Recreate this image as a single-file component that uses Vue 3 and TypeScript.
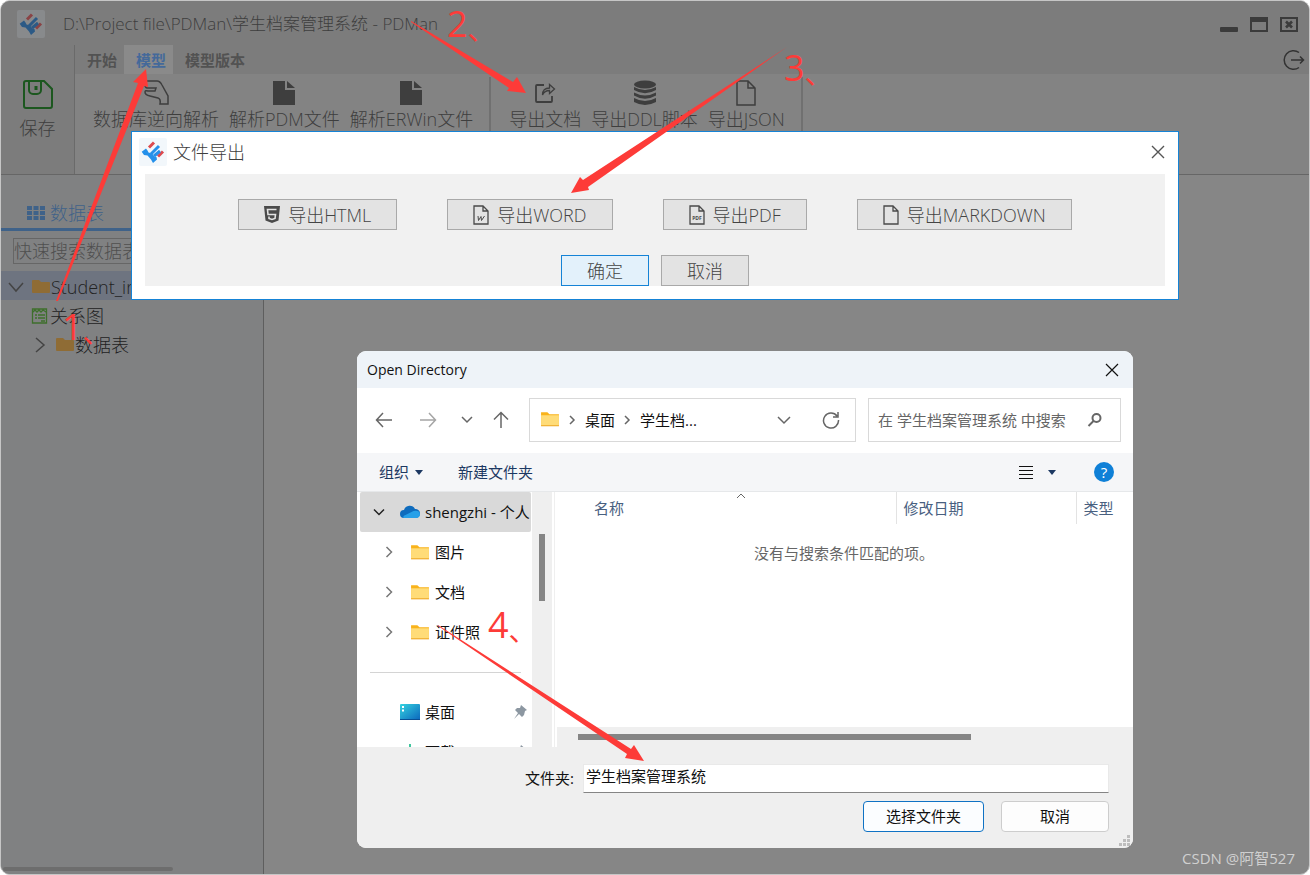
<script setup lang="ts">
import { ref } from 'vue'

interface RibbonItem {
  label: string
  icon: 'reverse' | 'file' | 'share' | 'database' | 'blank'
}

interface ExportOption {
  label: string
  icon: 'html' | 'word' | 'pdf' | 'blank'
}

interface Arrow {
  points: string
  step: number
  x: number
  y: number
}

const tabs: string[] = ['开始', '模型', '模型版本']
const activeTab = ref<string>('模型')

const ribbonGroups: RibbonItem[][] = [
  [
    { label: '数据库逆向解析', icon: 'reverse' },
    { label: '解析PDM文件', icon: 'file' },
    { label: '解析ERWin文件', icon: 'file' },
  ],
  [
    { label: '导出文档', icon: 'share' },
    { label: '导出DDL脚本', icon: 'database' },
    { label: '导出JSON', icon: 'blank' },
  ],
]

const exportOptions: ExportOption[] = [
  { label: '导出HTML', icon: 'html' },
  { label: '导出WORD', icon: 'word' },
  { label: '导出PDF', icon: 'pdf' },
  { label: '导出MARKDOWN', icon: 'blank' },
]

const folders: string[] = ['图片', '文档', '证件照']
const search = ref<string>('')
const fileSearch = ref<string>('')
const folderName = ref<string>('学生档案管理系统')

const arrows: Arrow[] = [
  { points: '56,301 138,83 133,82 146,69 148,87 144,86 58,301', step: 1, x: 62, y: 340 },
  { points: '411,21 513,82 517,77 526,93 507,91 509,88 411,22', step: 2, x: 447, y: 37 },
  { points: '787,47 583,180 580,177 571,193 589,190 588,187', step: 3, x: 784, y: 81 },
  { points: '438,625 631,749 634,745 644,761 625,758 627,754 438,626', step: 4, x: 488, y: 638 },
]
</script>

<template>
  <div class="screen">
    <div class="window">
      <header class="titlebar">
        <svg class="logo dim" viewBox="0 0 28 28" aria-hidden="true">
          <rect class="tile" width="28" height="28" rx="2" />
          <path class="red" d="M10 9.500l5-5M19 18.500l5-5" />
          <path class="blue-line" d="M20 8l-8 8M15 18l6-5" />
          <path class="blue" d="M2.700 13.700L7 10.500l1.500 2 1 2 3.500 1 2.500 3 2 .5.5 2.500-4 3.500-2-3.500-3.500-4-3.500-.5z" />
        </svg>
        <h1>D:\Project file\PDMan\学生档案管理系统 - PDMan</h1>
        <div class="window-buttons">
          <button type="button" aria-label="最小化">
            <svg viewBox="0 0 18 18"><rect y="12" width="18" height="5" rx="1" fill="#3b3b3b" /></svg>
          </button>
          <button type="button" aria-label="最大化">
            <svg viewBox="0 0 18 18"><path d="M1 3h16v13H1z" fill="none" stroke="#3b3b3b" stroke-width="2" /><path d="M0 2h18v5H0z" fill="#3b3b3b" /></svg>
          </button>
          <button type="button" aria-label="关闭">
            <svg viewBox="0 0 18 18"><path d="M1 3h16v13H1z" fill="none" stroke="#3b3b3b" stroke-width="2" /><path d="M6 6.500l6 6M12 6.500l-6 6" stroke="#3b3b3b" stroke-width="2.600" /></svg>
          </button>
        </div>
      </header>

      <div class="ribbon">
        <button type="button" class="save">
          <svg viewBox="0 0 30 30" fill="none" stroke="#1c571f" stroke-width="2">
            <path d="M3 1h18l8 8v17a2 2 0 0 1-2 2H3a2 2 0 0 1-2-2V3a2 2 0 0 1 2-2z" />
            <path d="M6 2v8a4 4 0 0 0 4 4h4a4 4 0 0 0 4-4V2" />
            <path d="M13 6v4" stroke-width="3" />
          </svg>
          <span>保存</span>
        </button>
        <div class="ribbon-main">
          <div class="tabs">
            <button
              v-for="tab in tabs"
              :key="tab"
              type="button"
              :class="['tab', { active: tab === activeTab }]"
              @click="activeTab = tab"
            >{{ tab }}</button>
            <button type="button" class="logout" aria-label="退出">
              <svg viewBox="0 0 22 22" fill="none" stroke="#333" stroke-width="1.500">
                <path d="M16 3.500A9.300 9.300 0 1 0 16 18.500M8 11h12M17 7.500l3.500 3.500-3.500 3.500" />
              </svg>
            </button>
          </div>
          <div class="tools">
            <div v-for="(group, g) in ribbonGroups" :key="g" class="tool-group">
              <button v-for="item in group" :key="item.label" type="button" class="tool">
                <svg viewBox="0 0 26 26" fill="none" stroke="#3e3e3e" stroke-width="1.500">
                  <path v-if="item.icon === 'reverse'" d="M2 1h12q3 0 5 4l6 11v8h-8q1-5-2-6l-8-2q-5-1-5-4 0-2 3-1h7l1-3H4Q1 7 2 1z" />
                  <g v-else-if="item.icon === 'file'" fill="#3e3e3e" stroke="none">
                    <path d="M2 1h12v9h10v15H2z" /><path d="M16 1l8 7h-8z" />
                  </g>
                  <g v-else-if="item.icon === 'share'">
                    <path d="M12 5H5a1 1 0 0 0-1 1v15a1 1 0 0 0 1 1h14a1 1 0 0 0 1-1v-5" stroke-width="1.800" />
                    <path d="M10.500 15q0-7 7-7V4.500L22.500 9l-5 4.500V10.500q-5 0-7 4.500z" stroke-width="1.300" />
                  </g>
                  <g v-else-if="item.icon === 'database'" fill="#3e3e3e" stroke="none">
                    <ellipse cx="13" cy="4.500" rx="11" ry="4" />
                    <path d="M2 7q11 6 22 0v3q-11 6.500-22 0zM2 12.500q11 6 22 0v3q-11 6.500-22 0zM2 18q11 6 22 0v4q-11 6-22 0z" />
                  </g>
                  <path v-else d="M4 1h11l7 7v17H4zM15 1v7h7" />
                </svg>
                <span>{{ item.label }}</span>
              </button>
            </div>
          </div>
        </div>
      </div>

      <div class="body">
        <aside class="sidebar">
          <div class="side-tab">
            <svg viewBox="0 0 18 14" fill="#3f6289">
              <path d="M0 0h5v4H0zM6.500 0h5v4h-5zM13 0h5v4h-5zM0 5h5v4H0zM6.500 5h5v4h-5zM13 5h5v4h-5zM0 10h5v4H0zM6.500 10h5v4h-5zM13 10h5v4h-5z" />
            </svg>
            <span>数据表</span>
          </div>
          <input v-model="search" class="side-search" type="text" placeholder="快速搜索数据表" aria-label="快速搜索数据表" />
          <ul class="tree">
            <li class="node selected">
              <svg class="caret" viewBox="0 0 16 16"><path d="M1 4l7 8 7-8" /></svg>
              <svg class="folder" viewBox="0 0 18 16"><path d="M1 1h6l2 2h8q1 0 1 1v9q0 1-1 1H1q-1 0-1-1V2q0-1 1-1z" /></svg>
              <span>Student_info</span>
            </li>
            <li class="node diagram">
              <svg class="folder" viewBox="0 0 18 16">
                <path class="green" d="M1.500 1h14v14h-14zM2 4l2-2 2 2 2-2 2 2 2-2 3 2M4 7h2M7 7h7M4 10h2M7 10h7M10 13h4" />
              </svg>
              <span>关系图</span>
            </li>
            <li class="node child">
              <svg class="caret" viewBox="0 0 16 16"><path d="M4 1l8 7-8 7" /></svg>
              <svg class="folder" viewBox="0 0 18 16"><path d="M1 1h6l2 2h8q1 0 1 1v9q0 1-1 1H1q-1 0-1-1V2q0-1 1-1z" /></svg>
              <span>数据表</span>
            </li>
          </ul>
          <div class="side-scroll"></div>
        </aside>
        <main class="canvas"></main>
      </div>
    </div>

    <section class="export" role="dialog" aria-label="文件导出">
      <header>
        <svg class="logo" viewBox="0 0 28 28" aria-hidden="true">
          <rect class="tile" width="28" height="28" rx="2" />
          <path class="red" d="M10 9.500l5-5M19 18.500l5-5" />
          <path class="blue-line" d="M20 8l-8 8M15 18l6-5" />
          <path class="blue" d="M2.700 13.700L7 10.500l1.500 2 1 2 3.500 1 2.500 3 2 .5.5 2.500-4 3.500-2-3.500-3.500-4-3.500-.5z" />
        </svg>
        <h2>文件导出</h2>
        <button type="button" class="close" aria-label="关闭">
          <svg viewBox="0 0 14 14"><path d="M1 1l12 12M13 1L1 13" stroke="#555" stroke-width="1.400" /></svg>
        </button>
      </header>
      <div class="export-body">
        <div class="options">
          <button v-for="option in exportOptions" :key="option.label" type="button" class="flat">
            <svg viewBox="0 0 16 20" fill="none" stroke="#4a4a4a" stroke-width="1.300">
              <g v-if="option.icon === 'html'" stroke="none">
                <path d="M0 1h16l-1.500 14.500L8 18l-6.500-2.500z" fill="#4a4a4a" />
                <path d="M12.500 4.500h-9l.5 5h7.500l-.5 4L8 14.500 5 13.500v-2" stroke="#e3e3e3" stroke-width="1.600" />
              </g>
              <g v-else>
                <path d="M1 1h9l5 5v13H1zM10 1v5h5" />
                <path v-if="option.icon === 'word'" d="M5 11l.5 4.500L8 11.500l.5 4L11.500 11" stroke-width="1" />
              </g>
              <text v-if="option.icon === 'pdf'" x="8" y="15" class="pdf">PDF</text>
            </svg>
            <span>{{ option.label }}</span>
          </button>
        </div>
        <div class="confirm">
          <button type="button" class="flat primary">确定</button>
          <button type="button" class="flat">取消</button>
        </div>
      </div>
    </section>

    <section class="picker" role="dialog" aria-label="Open Directory">
      <header class="picker-title">
        <h2>Open Directory</h2>
        <button type="button" class="close" aria-label="Close">
          <svg viewBox="0 0 14 14"><path d="M1 1l12 12M13 1L1 13" stroke="#111" stroke-width="1.200" /></svg>
        </button>
      </header>

      <div class="nav">
        <div class="nav-buttons">
          <button type="button" aria-label="后退"><svg viewBox="0 0 18 18"><path d="M17 9H2M8 2L1.500 9 8 16" /></svg></button>
          <button type="button" class="faint" aria-label="前进"><svg viewBox="0 0 18 18"><path d="M1 9h15M10 2l6.500 7-6.500 7" /></svg></button>
          <button type="button" class="narrow" aria-label="历史"><svg viewBox="0 0 18 18"><path d="M4 6l5 5 5-5" /></svg></button>
          <button type="button" class="narrow" aria-label="上一级"><svg viewBox="0 0 18 18"><path d="M9 17V2M2 8.500L9 1.500l7 7" /></svg></button>
        </div>
        <div class="path">
          <svg class="win-folder" viewBox="0 0 19 16"><path d="M1 1h6l2 2h9v11H1z" fill="#f9b31b" /><path d="M1 4h17v10H1z" fill="#ffdc78" /><path d="M1 14h17" stroke="#eda827" stroke-width="1" /></svg>
          <svg class="step" viewBox="0 0 8 10"><path d="M2 1l4 4-4 4" /></svg>
          <a href="#">桌面</a>
          <svg class="step" viewBox="0 0 8 10"><path d="M2 1l4 4-4 4" /></svg>
          <a href="#">学生档...</a>
          <button type="button" class="history" aria-label="展开"><svg viewBox="0 0 18 18"><path d="M3 6l6 6 6-6" /></svg></button>
          <button type="button" aria-label="刷新"><svg viewBox="0 0 18 18"><path d="M15 5A7.500 7.500 0 1 0 16.500 9M16 1v5h-5" /></svg></button>
        </div>
        <div class="search">
          <input v-model="fileSearch" type="text" placeholder="在 学生档案管理系统 中搜索" aria-label="在 学生档案管理系统 中搜索" />
          <svg viewBox="0 0 16 16"><circle cx="9.500" cy="6" r="4" /><path d="M6.500 9L1.500 14" /></svg>
        </div>
      </div>

      <div class="commands">
        <button type="button">组织<svg class="drop" viewBox="0 0 8 5"><path d="M0 0h8L4 5z" fill="#1c3862" /></svg></button>
        <button type="button">新建文件夹</button>
        <button type="button" class="view" aria-label="视图">
          <svg class="list" viewBox="0 0 16 16"><path d="M1 2.500h14M1 6.500h14M1 10.500h14M1 14.500h14" stroke="#111" stroke-width="1" /></svg>
          <svg class="drop" viewBox="0 0 8 5"><path d="M0 0h8L4 5z" fill="#1c3862" /></svg>
        </button>
        <button type="button" class="help" aria-label="帮助">?</button>
      </div>

      <div class="panes">
        <nav class="places">
          <div class="place current">
            <svg class="arrow" viewBox="0 0 12 12"><path d="M1 3.500l5 5 5-5" stroke="#222" /></svg>
            <svg class="cloud" viewBox="0 0 20 14"><path d="M4 13a4 4 0 0 1 0-8 6 6 0 0 1 11-1 4.500 4.500 0 0 1 1 9z" fill="#0f6cbd" /><path d="M3.500 13q-1-2 2-3l8-4q6-1 6.500 3 0 4-4 4z" fill="#28a0e8" /></svg>
            <span>shengzhi - 个人</span>
          </div>
          <div v-for="name in folders" :key="name" class="place nested">
            <svg class="arrow" viewBox="0 0 12 12"><path d="M3.500 1l5 5-5 5" stroke="#777" /></svg>
            <svg class="win-folder" viewBox="0 0 19 16"><path d="M1 1h6l2 2h9v11H1z" fill="#f9b31b" /><path d="M1 4h17v10H1z" fill="#ffdc78" /><path d="M1 14h17" stroke="#eda827" stroke-width="1" /></svg>
            <span>{{ name }}</span>
          </div>
          <hr />
          <div class="place pinned">
            <svg class="cloud" viewBox="0 0 20 16">
              <defs><linearGradient id="desk" x1="0" y1="0" x2="1" y2="1"><stop offset="0" stop-color="#35d3e0" /><stop offset="1" stop-color="#0b66bd" /></linearGradient></defs>
              <rect width="20" height="16" rx="1" fill="url(#desk)" /><path d="M2 2h2v2H2zM2 5.500h2v2H2z" fill="#fff" /><path d="M0 15.500h20" stroke="#0a4f94" />
            </svg>
            <span>桌面</span>
            <svg class="pin" viewBox="0 0 14 14"><path d="M8 0l6 5-2 1-1 4-2 2-3-3-5 5 4-6-3-3 2-2h3z" fill="#8c97a1" /></svg>
          </div>
          <div class="place pinned">
            <svg class="cloud" viewBox="0 0 20 20"><path d="M10 0v13M5 9l5 5 5-5M2 18h16" fill="none" stroke="#12b886" stroke-width="2" /></svg>
            <span>下载</span>
            <svg class="pin" viewBox="0 0 14 14"><path d="M8 0l6 5-2 1-1 4-2 2-3-3-5 5 4-6-3-3 2-2h3z" fill="#8c97a1" /></svg>
          </div>
        </nav>
        <div class="v-scroll"><div class="v-thumb"></div></div>
        <div class="files">
          <svg class="sort" viewBox="0 0 10 6"><path d="M1 5l4-4 4 4" /></svg>
          <table>
            <thead>
              <tr><th class="name">名称</th><th class="date">修改日期</th><th>类型</th></tr>
            </thead>
            <tbody>
              <tr><td colspan="3">没有与搜索条件匹配的项。</td></tr>
            </tbody>
          </table>
          <div class="h-scroll"><div class="h-thumb"></div></div>
        </div>
      </div>

      <footer class="picker-foot">
        <div class="folder-row">
          <label for="folder-name">文件夹:</label>
          <input id="folder-name" v-model="folderName" type="text" />
        </div>
        <div class="foot-buttons">
          <button type="button" class="choose">选择文件夹</button>
          <button type="button">取消</button>
        </div>
        <svg class="grip" viewBox="0 0 11 11" fill="#bdbdbd"><path d="M8 0h3v3H8zM4 4h3v3H4zM8 4h3v3H8zM0 8h3v3H0zM4 8h3v3H4zM8 8h3v3H8z" /></svg>
      </footer>
    </section>

    <svg class="notes" width="1310" height="875" viewBox="0 0 1310 875">
      <g v-for="arrow in arrows" :key="arrow.step">
        <polygon :points="arrow.points" />
        <text :x="arrow.x" :y="arrow.y">{{ arrow.step }}<tspan class="mark" dy="3">、</tspan></text>
      </g>
    </svg>
    <div class="credit">CSDN @阿智527</div>
  </div>
</template>

<style>
html,
body,
#app {
  height: 100%;
}
body {
  overflow: hidden;
  background: #fff;
}
</style>

<style scoped>
* {
  box-sizing: border-box;
}
.screen {
  position: relative;
  height: 100%;
  font-family: 'Open Sans', 'Noto Sans CJK SC', sans-serif;
  font-size: 18px;
  font-weight: 300;
  line-height: 24px;
  color: #3e3e3e;
}
button,
input {
  font: inherit;
  color: inherit;
  padding: 0;
  margin: 0;
  border: 0;
  border-radius: 0;
  background: none;
  outline: none;
}
h1,
h2 {
  margin: 0;
  font: inherit;
}
svg {
  display: block;
  flex: none;
}
.window {
  height: 100%;
  display: flex;
  flex-direction: column;
  border: 1px solid #c6c6c6;
  border-radius: 10px;
  background: #868686;
  overflow: hidden;
}
.titlebar {
  display: flex;
  align-items: center;
  height: 44px;
  padding: 2px 11px 0 16px;
  background: #7c7c7c;
}
.titlebar h1 {
  flex: 1;
  margin-left: 18px;
  font-size: 17px;
}
.logo {
  width: 28px;
  height: 28px;
}
.logo .tile {
  fill: #f2f7fb;
}
.logo .red {
  fill: none;
  stroke: #dc4a4f;
  stroke-width: 3;
}
.logo .blue-line {
  fill: none;
  stroke: #2490ea;
  stroke-width: 3;
}
.logo .blue {
  fill: #2490ea;
}
.logo.dim .tile {
  fill: #888a8c;
}
.logo.dim .red {
  stroke: #8a4345;
}
.logo.dim .blue-line {
  stroke: #2c5a86;
}
.logo.dim .blue {
  fill: #2c5a86;
}
.window-buttons {
  display: flex;
  gap: 12px;
}
.window-buttons svg {
  width: 18px;
  height: 18px;
}
.ribbon {
  display: flex;
  height: 130px;
  border-bottom: 1px solid #666;
  background: #7c7c7c;
}
.save {
  display: flex;
  flex-direction: column;
  align-items: center;
  gap: 6px;
  width: 74px;
  padding-top: 35px;
  border-right: 1px solid #6a6a6a;
}
.save svg {
  width: 30px;
  height: 30px;
}
.ribbon-main {
  flex: 1;
  display: flex;
  flex-direction: column;
  min-width: 0;
}
.tabs {
  display: flex;
  height: 29px;
}
.tab {
  padding: 1px 7px 0 12px;
  font-size: 15px;
  font-weight: 700;
  color: #525252;
}
.tab.active {
  background: #8a8a8a;
  color: #44699a;
}
.logout {
  margin-left: auto;
  padding-right: 4px;
}
.logout svg {
  width: 22px;
  height: 22px;
}
.tools {
  flex: 1;
  display: flex;
  background: #838383;
}
.tool-group {
  display: flex;
  align-items: flex-start;
  gap: 10px;
  height: 96px;
  margin-top: 3px;
  padding: 3px 16px 0 18px;
  border-right: 2px solid #707070;
}
.tool {
  display: flex;
  flex-direction: column;
  align-items: center;
  gap: 1px;
  white-space: nowrap;
}
.tool svg {
  width: 26px;
  height: 26px;
}
.body {
  flex: 1;
  display: flex;
  min-height: 0;
}
.sidebar {
  display: flex;
  flex-direction: column;
  width: 263px;
  border-right: 1px solid #5e5e5e;
  background: #808182;
}
.canvas {
  flex: 1;
}
.side-tab {
  display: flex;
  align-items: flex-end;
  gap: 5px;
  width: 180px;
  height: 56px;
  padding: 0 0 3px 26px;
  border-bottom: 3px solid #3f6289;
  color: #3f6289;
}
.side-tab svg {
  width: 18px;
  height: 14px;
  margin-bottom: 5px;
}
.side-search {
  height: 26px;
  margin: 7px 12px 7px 12px;
  border: 1px solid #666;
}
.side-search::placeholder {
  color: #4f4f4f;
  opacity: 1;
}
.tree {
  flex: 1;
  margin: 0;
  padding: 0;
  list-style: none;
  color: #222;
}
.node {
  display: flex;
  align-items: center;
  height: 29px;
  padding: 2px 0 0 7px;
}
.node.selected {
  background: #6e7480;
}
.node.diagram {
  padding-left: 30px;
}
.node.child {
  padding-left: 31px;
}
.caret {
  width: 16px;
  height: 16px;
  margin-right: 8px;
  fill: none;
  stroke: #444;
  stroke-width: 1.500;
}
.folder {
  width: 18px;
  height: 16px;
  margin-right: 1px;
  fill: #8f6c35;
}
.folder .green {
  fill: none;
  stroke: #3e6f2c;
  stroke-width: 1.300;
}
.side-scroll {
  width: 170px;
  height: 4px;
  margin: 0 0 3px 2px;
  border-radius: 2px;
  background: #6d6d6d;
}

.export {
  position: absolute;
  top: 131px;
  left: 131px;
  right: 131px;
  padding: 0 13px 13px;
  border: 1px solid #1583d6;
  background: #fff;
}
.export header {
  display: flex;
  align-items: center;
  height: 42px;
  margin-left: -6px;
  padding-bottom: 2px;
}
.export h2 {
  flex: 1;
  margin-left: 6px;
}
.export .close svg {
  width: 14px;
  height: 14px;
}
.export-body {
  padding-top: 25px;
  background: #f1f1f1;
}
.options {
  display: flex;
  justify-content: center;
  gap: 50px;
}
.flat {
  display: flex;
  align-items: center;
  justify-content: center;
  gap: 8px;
  min-width: 88px;
  height: 31px;
  padding: 0 25px;
  border: 1px solid #a9a9a9;
  background: #e3e3e3;
  color: #444;
  white-space: nowrap;
}
.flat svg {
  width: 16px;
  height: 20px;
}
.pdf {
  fill: #4a4a4a;
  stroke: none;
  font-size: 5px;
  font-weight: 700;
  text-anchor: middle;
}
.confirm {
  display: flex;
  justify-content: center;
  gap: 12px;
  margin-top: 25px;
}
.flat.primary {
  border-color: #1583d6;
  background: #e3f1fb;
}

.picker {
  position: absolute;
  top: 351px;
  left: 357px;
  width: 776px;
  border-radius: 9px;
  background: #fff;
  overflow: hidden;
  font-size: 15px;
  font-weight: 400;
  line-height: 20px;
  color: #111;
}
.picker-title {
  display: flex;
  align-items: center;
  justify-content: space-between;
  height: 37px;
  padding: 0 14px 0 10px;
  background: #eef3f8;
}
.picker-title h2 {
  font-size: 14px;
}
.picker-title .close svg {
  width: 14px;
  height: 14px;
}
.nav {
  display: flex;
  align-items: center;
  height: 65px;
  padding: 0 12px 2px 5px;
}
.nav svg {
  width: 18px;
  height: 18px;
  fill: none;
  stroke: #666;
  stroke-width: 1.500;
}
.nav-buttons {
  display: flex;
  margin-right: 11px;
}
.nav-buttons button {
  display: flex;
  justify-content: center;
  width: 44px;
}
.nav-buttons .narrow {
  width: 34px;
}
.nav .faint svg {
  stroke: #a5a5a5;
}
.path {
  flex: 1;
  display: flex;
  align-items: center;
  height: 44px;
  padding: 0 15px 0 10px;
  border: 1px solid #d9d9d9;
}
.path a {
  color: #111;
  text-decoration: none;
}
.nav .step {
  width: 8px;
  height: 10px;
  margin: 0 9px 0 8px;
}
.path .history {
  margin: 0 29px 0 auto;
}
.nav .win-folder,
.win-folder {
  width: 20px;
  height: 17px;
  stroke: none;
}
.search {
  display: flex;
  align-items: center;
  width: 253px;
  height: 44px;
  margin-left: 12px;
  padding: 0 17px 0 9px;
  border: 1px solid #d9d9d9;
}
.search input {
  flex: 1;
  min-width: 0;
}
.search input::placeholder {
  color: #666;
  opacity: 1;
}
.search svg {
  width: 16px;
  height: 16px;
  stroke-width: 2;
}
.commands {
  display: flex;
  align-items: center;
  height: 39px;
  padding: 0 19px 0 22px;
  border-bottom: 1px solid #e6e8ea;
  background: #f5f6f8;
  color: #1c3862;
}
.commands button {
  display: flex;
  align-items: center;
  gap: 6px;
  margin-right: 35px;
}
.drop {
  width: 8px;
  height: 5px;
}
.commands .view {
  gap: 14px;
  margin: 0 38px 0 auto;
}
.list {
  width: 16px;
  height: 16px;
}
.commands .help {
  justify-content: center;
  width: 20px;
  height: 20px;
  margin: 0;
  border-radius: 50%;
  background: #0f80d7;
  color: #fff;
}
.panes {
  display: flex;
  height: 255px;
}
.places {
  width: 172px;
  margin: 0 0 0 3px;
  overflow: hidden;
}
.place {
  display: flex;
  align-items: center;
  gap: 5px;
  height: 40px;
  padding-left: 13px;
  white-space: nowrap;
}
.place.current {
  margin-right: 1px;
  border-radius: 2px;
  background: #d9d9d9;
  overflow: hidden;
}
.place.nested {
  padding-left: 23px;
}
.place.pinned {
  padding: 0 5px 0 40px;
}
.arrow {
  width: 12px;
  height: 12px;
  margin-right: 10px;
  fill: none;
  stroke-width: 1.500;
}
.cloud {
  width: 20px;
  height: 16px;
}
.pin {
  width: 14px;
  height: 14px;
  margin-left: auto;
}
.places hr {
  height: 1px;
  margin: 20px 11px 19px 10px;
  border: 0;
  background: #d4d4d4;
}
.v-scroll {
  width: 20px;
  padding: 42px 7px 0;
  background: #efefef;
}
.v-thumb {
  width: 6px;
  height: 67px;
  background: #858585;
}
.files {
  position: relative;
  flex: 1;
  display: flex;
  flex-direction: column;
  justify-content: space-between;
  min-width: 0;
  margin-left: 2px;
  border-left: 1px solid #efefef;
}
.sort {
  position: absolute;
  top: 1px;
  left: 181px;
  width: 10px;
  height: 6px;
  fill: none;
  stroke: #666;
}
.files table {
  width: 100%;
  table-layout: fixed;
  border-collapse: collapse;
}
.files th {
  height: 32px;
  padding: 0 0 0 7px;
  border-right: 1px solid #e3e3e3;
  font-weight: 400;
  text-align: left;
  color: #49607f;
}
.files th:last-child {
  border-right: 0;
}
.files th.name {
  width: 341px;
  padding-left: 39px;
}
.files th.date {
  width: 180px;
}
.files td {
  height: 58px;
  padding: 0;
  text-align: center;
  color: #666;
}
.h-scroll {
  height: 20px;
  margin-left: 2px;
  padding: 7px 0 0 21px;
  background: #efefef;
}
.h-thumb {
  width: 393px;
  height: 6px;
  background: #858585;
}
.picker-foot {
  position: relative;
  padding: 17px 24px 16px;
  background: #efefef;
}
.folder-row {
  display: flex;
  align-items: center;
  padding-left: 144px;
}
.folder-row label {
  width: 58px;
  padding-bottom: 2px;
}
.folder-row input {
  flex: 1;
  height: 29px;
  padding: 0 2px 6px;
  border: 1px solid #e9e9e9;
  border-bottom-color: #858585;
  background: #fff;
}
.foot-buttons {
  display: flex;
  justify-content: flex-end;
  gap: 17px;
  margin-top: 8px;
}
.foot-buttons button {
  width: 108px;
  height: 31px;
  padding-bottom: 2px;
  border: 1px solid #cdcdcd;
  border-radius: 4px;
  background: #fdfdfd;
}
.foot-buttons .choose {
  width: 121px;
  border-color: #0f72c4;
  background: #fbfdff;
}
.grip {
  position: absolute;
  right: 3px;
  bottom: 2px;
  width: 11px;
  height: 11px;
}
.notes {
  position: absolute;
  top: 0;
  left: 0;
  pointer-events: none;
  fill: #fd3b38;
  font-size: 36px;
  font-weight: 400;
}
.notes .mark {
  font-size: 28px;
}
.credit {
  position: absolute;
  right: 15px;
  bottom: 5px;
  font-size: 15px;
  font-weight: 400;
  color: #d0d0d0;
}
</style>
